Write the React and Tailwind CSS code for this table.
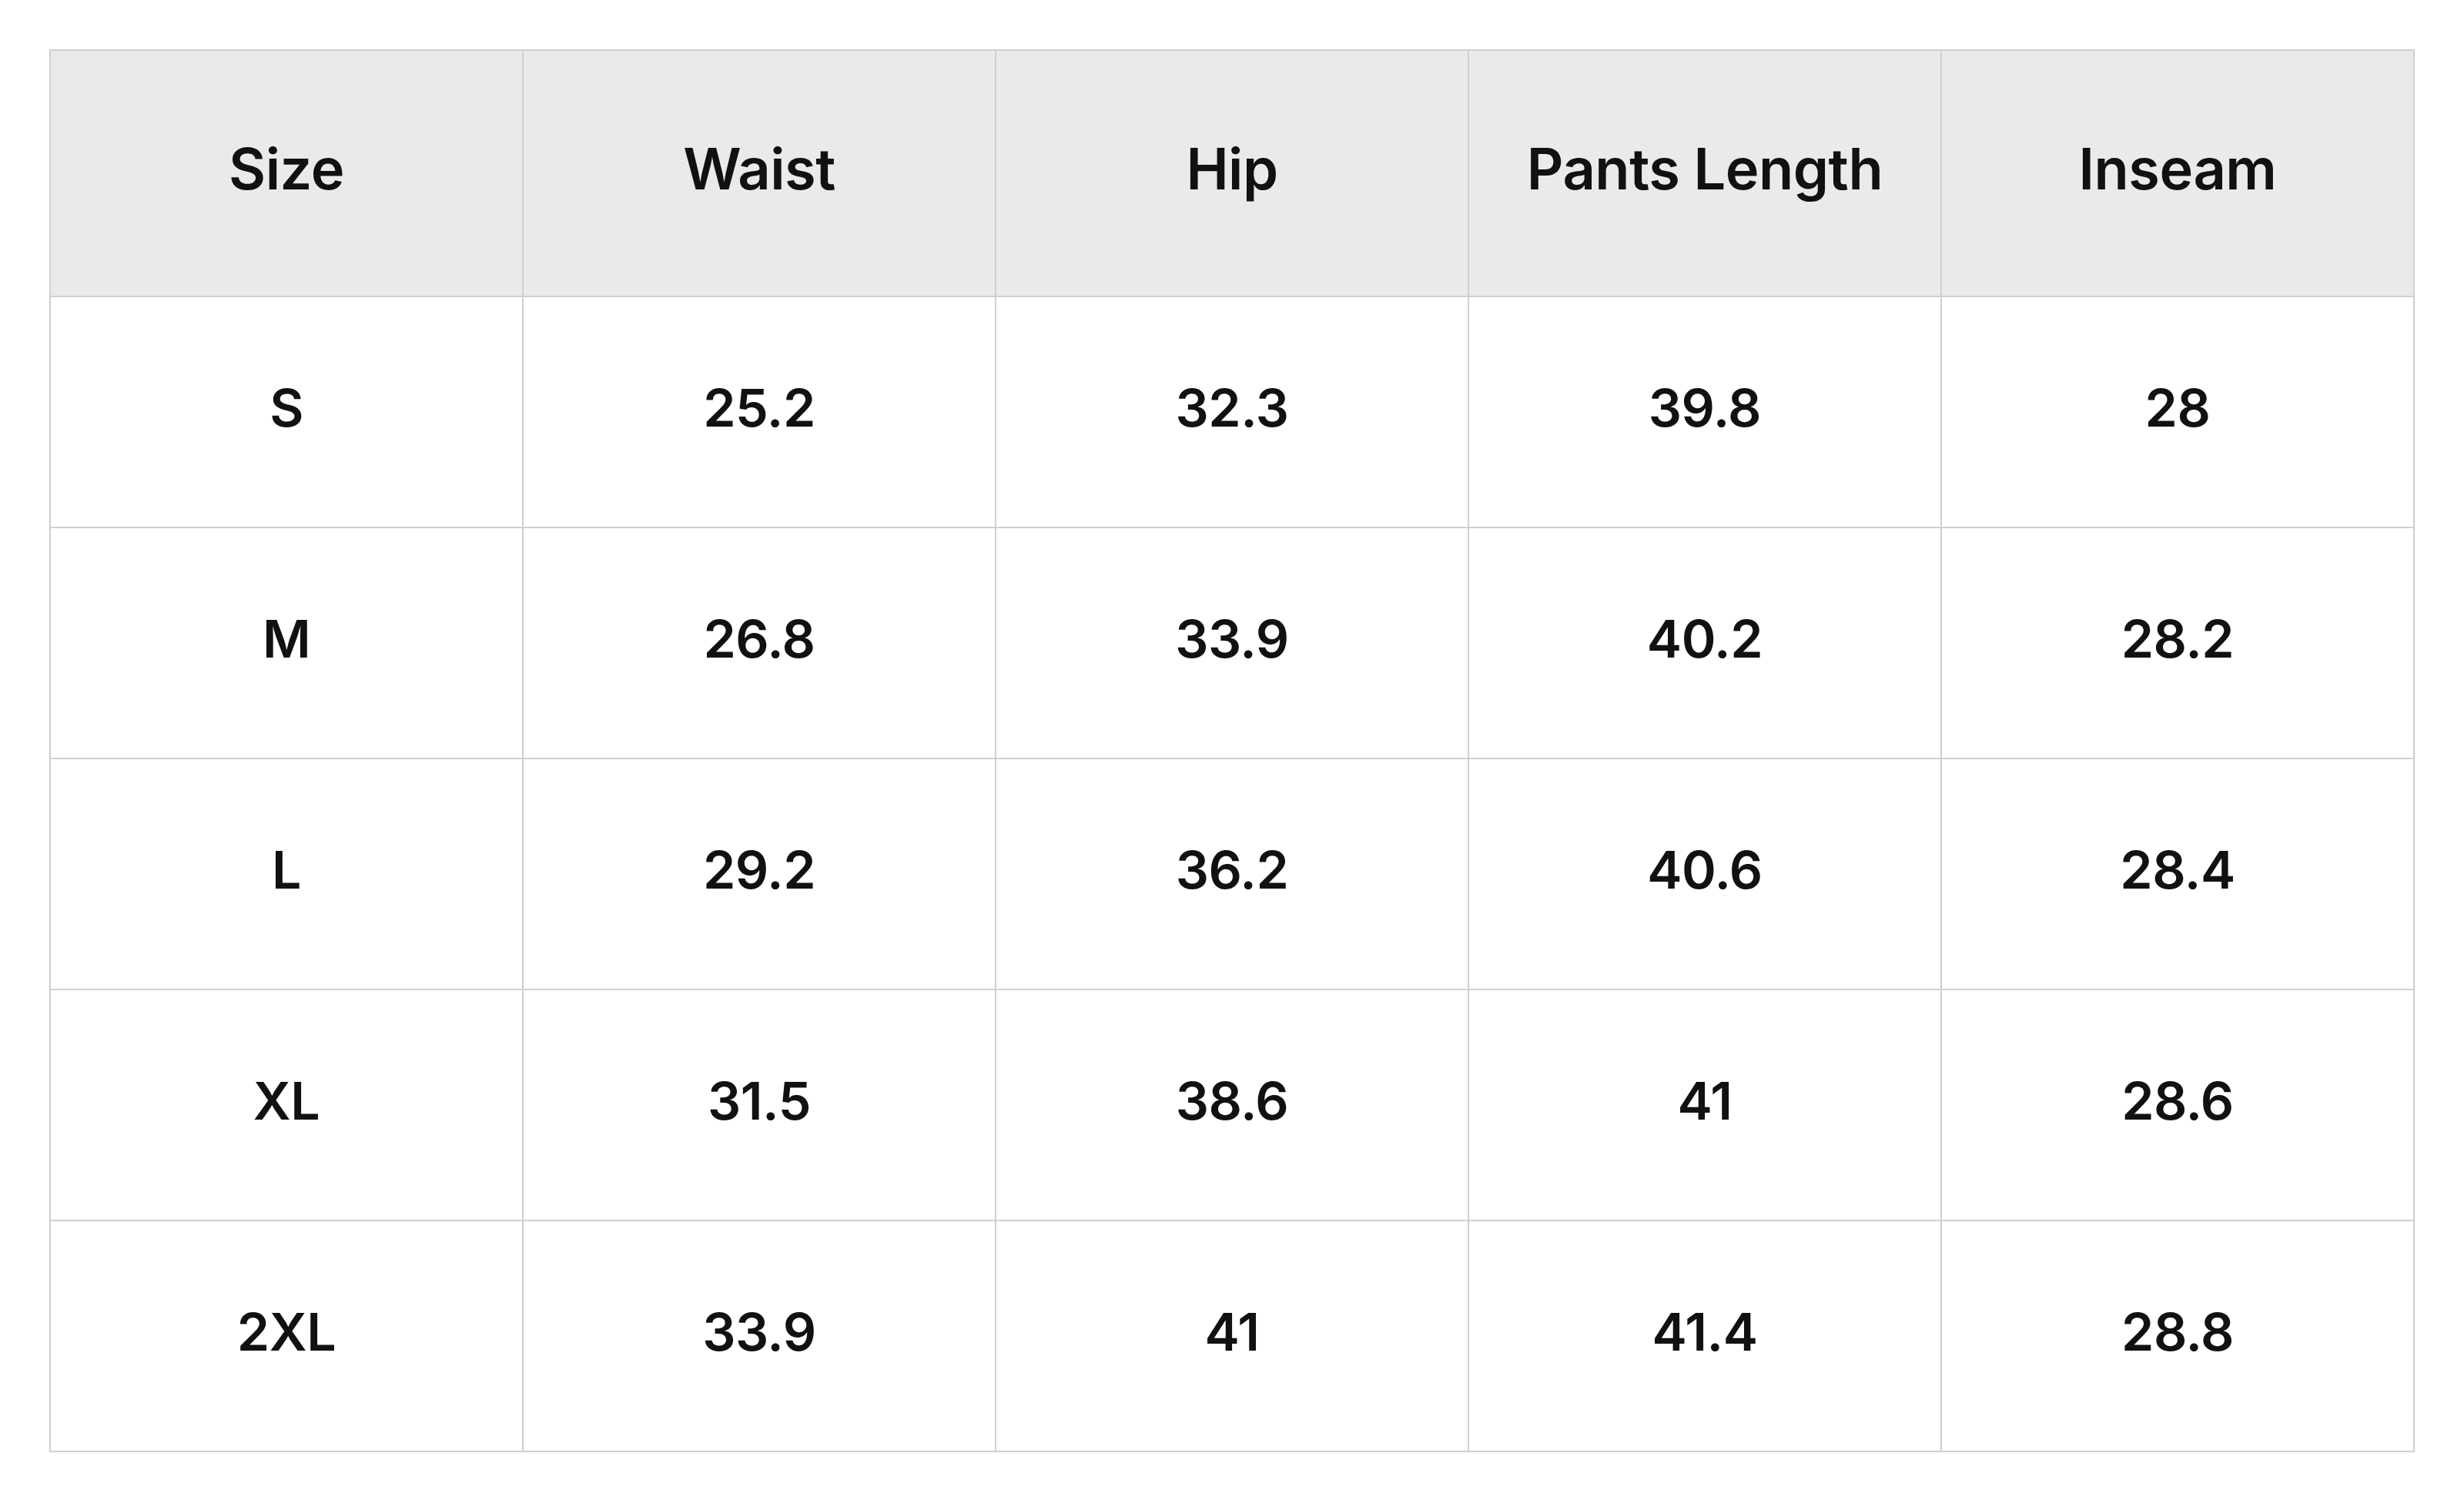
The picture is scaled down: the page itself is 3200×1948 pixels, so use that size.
import React from "react";

const headers = ["Size", "Waist", "Hip", "Pants Length", "Inseam"];
const rows = [
  ["S", "25.2", "32.3", "39.8", "28"],
  ["M", "26.8", "33.9", "40.2", "28.2"],
  ["L", "29.2", "36.2", "40.6", "28.4"],
  ["XL", "31.5", "38.6", "41", "28.6"],
  ["2XL", "33.9", "41", "41.4", "28.8"],
];

export default function App() {
  return (
    <div className="min-h-[1948px] w-full bg-white p-16 font-['Inter',sans-serif] text-[#111111]">
      <table className="w-full table-fixed border-collapse">
        <thead>
          <tr className="h-[320px] bg-[#eaeaea]">
            {headers.map((h) => (
              <th
                key={h}
                className="border-2 border-[#d0d0d0] pb-3 text-center align-middle text-[74px] font-semibold tracking-[-0.5px]"
              >
                {h}
              </th>
            ))}
          </tr>
        </thead>
        <tbody>
          {rows.map((r, i) => (
            <tr key={i} className="h-[300px]">
              {r.map((c, j) => (
                <td
                  key={j}
                  className="border-2 border-[#d0d0d0] pb-3 text-center align-middle text-[68px] font-semibold tracking-[-0.5px]"
                >
                  {c}
                </td>
              ))}
            </tr>
          ))}
        </tbody>
      </table>
    </div>
  );
}
